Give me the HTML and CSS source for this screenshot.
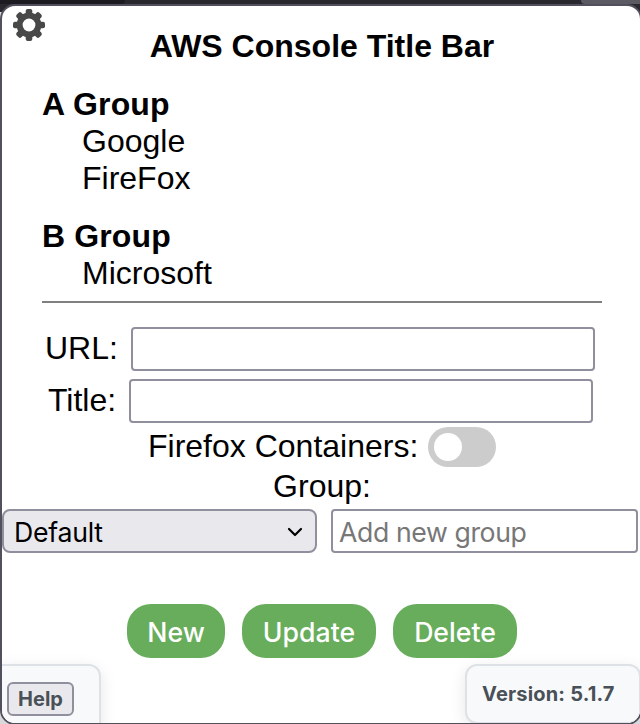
FILE: index.html
```html
<!DOCTYPE html>
<html lang="en">
<head>
<meta charset="utf-8">
<title>AWS Console Title Bar</title>
<link rel="stylesheet" href="styles.css">
</head>
<body>
<div class="browser-strip"><span class="tab-left"></span><span class="tab-right"></span></div>
<main class="popup">
  <svg class="settings" viewBox="0 0 32 32" aria-label="Settings">
    <g fill="#484848">
      <rect x="12.7" y="0" width="6.6" height="32" rx="2"/>
      <rect x="12.7" y="0" width="6.6" height="32" rx="2" transform="rotate(45 16 16)"/>
      <rect x="12.7" y="0" width="6.6" height="32" rx="2" transform="rotate(90 16 16)"/>
      <rect x="12.7" y="0" width="6.6" height="32" rx="2" transform="rotate(135 16 16)"/>
      <circle cx="16" cy="16" r="12.4"/>
    </g>
    <circle cx="16" cy="16" r="6.4" fill="#fff"/>
  </svg>
  <h1>AWS Console Title Bar</h1>
  <section class="group">
    <h2>A Group</h2>
    <ul><li>Google</li><li>FireFox</li></ul>
  </section>
  <section class="group">
    <h2>B Group</h2>
    <ul><li>Microsoft</li></ul>
  </section>
  <hr>
  <form>
    <div class="row url"><label for="url">URL:</label><input class="field" id="url" type="text"></div>
    <div class="row name"><label for="title">Title:</label><input class="field" id="title" type="text"></div>
    <div class="row containers"><span>Firefox Containers:</span><span class="switch"><span class="knob"></span></span></div>
    <div class="group-label">Group:</div>
    <div class="group-row">
      <div class="select"><span>Default</span>
        <svg class="chevron" viewBox="0 0 16 10"><path d="M2 2L8 8L14 2" fill="none" stroke="#000" stroke-width="2.2" stroke-linecap="round" stroke-linejoin="round"/></svg>
      </div>
      <input class="new-group" type="text" placeholder="Add new group">
    </div>
    <div class="actions">
      <button class="new" type="button">New</button>
      <button class="update" type="button">Update</button>
      <button class="delete" type="button">Delete</button>
    </div>
  </form>
  <div class="help-box"><button class="help" type="button">Help</button></div>
  <div class="version">Version: 5.1.7</div>
</main>
</body>
</html>
```
FILE: styles.css
```css
* { box-sizing: border-box; }
body {
  margin: 0;
  height: 724px;
  overflow: hidden;
  background: linear-gradient(#29282f 0 12px, #d9d9dc 12px);
  color: #000;
  font: 32px/37px "Liberation Sans", Arial, sans-serif;
}
.browser-strip {
  height: 4px;
  display: flex;
  justify-content: space-between;
  background: #29282f;
}
.tab-left { width: 125px; background: #1c1b22; border-radius: 0 0 4px 0; }
.tab-right { width: 59px; background: #5b5a62; border-radius: 0 0 0 4px; }
.popup {
  position: relative;
  width: 642px;
  height: 721px;
  border: 2px solid #52505c;
  border-radius: 15px;
  background: #fff;
  overflow: hidden;
}
.settings { position: absolute; left: 11px; top: 3px; width: 32px; height: 32px; }
h1, h2, ul { margin: 0; padding: 0; font-size: 32px; }
h1 { padding-top: 22px; text-align: center; font-size: 32px; padding-left: 2px; }
.group { margin: 21px 40px 0; }
.group h2 { letter-spacing: .12px; }
ul { list-style: none; padding-left: 40px; }
hr { width: 560px; height: 2px; margin: 9px 0 24px 40px; border: 0; background: #808080; }
input {
  height: 44px;
  border: 2px solid #8f8f9d;
  border-radius: 4px;
  background: #fff;
  font: 26.67px Inter, sans-serif;
}
.field { width: 464px; }
.row { display: flex; height: 44px; }
.row label { line-height: 42px; }
.url { padding-left: 43px; margin-bottom: 8px; }
.url label { width: 86px; }
.name { padding-left: 46px; margin-bottom: 4px; }
.name label { width: 81px; }
.containers { height: 40px; padding-left: 146px; }
.containers > span:first-child { width: 280px; line-height: 39px; white-space: nowrap; }
.switch { width: 68px; height: 40px; padding: 6px; border-radius: 20px; background: #ccc; }
.knob { display: block; width: 28px; height: 28px; border-radius: 50%; background: #fff; }
.group-label { height: 42px; padding-left: 2px; text-align: center; line-height: 39px; }
.group-row { display: flex; gap: 14px; }
.select {
  display: flex;
  align-items: center;
  justify-content: space-between;
  width: 315px;
  height: 44px;
  padding: 1px 12px 0 10px;
  border: 2px solid #8f8f9d;
  border-radius: 8px;
  background: #e9e9ed;
  font: 26.67px Inter, sans-serif;
  letter-spacing: -.25px;
}
.chevron { width: 16px; height: 10px; }
.new-group { width: 307px; padding: 1px 6px 0; letter-spacing: -.4px; }
.new-group::placeholder { color: #777; opacity: 1; }
.actions { display: flex; gap: 17px; margin: 51px 0 0 125px; }
button { padding: 0; font-family: Inter, sans-serif; }
.actions button {
  height: 54px;
  padding-top: 2px;
  border: 0;
  border-radius: 24px;
  background: #67ad5b;
  color: #fff;
  font-size: 26.67px;
  font-weight: 500;
  letter-spacing: 0;
}
.actions .new { width: 98px; }
.actions .update { width: 134px; }
.actions .delete { width: 124px; }
.help-box, .version {
  position: absolute;
  top: 658px;
  height: 60px;
  border: 2px solid #dee2e6;
  background: #f8f9fa;
  box-shadow: 0 4px 16px rgba(0,0,0,.1);
}
.help-box { left: -2px; width: 101px; height: 70px; padding: 16px 0 0 7px; border-radius: 0 12px 0 0; display: flex; }
.help {
  width: 67px;
  height: 34px;
  border: 2px solid #8f8f9d;
  border-radius: 6px;
  background: #e9e9ed;
  color: #495057;
  font-size: 20px;
  font-weight: 700;
}
.help-box { border-left: 0; }
.version {
  left: 463px;
  width: 176px;
  padding-left: 15px;
  border-radius: 12px;
  color: #495057;
  font: 700 20px/56px Inter, sans-serif;
  letter-spacing: .18px;
}
```
